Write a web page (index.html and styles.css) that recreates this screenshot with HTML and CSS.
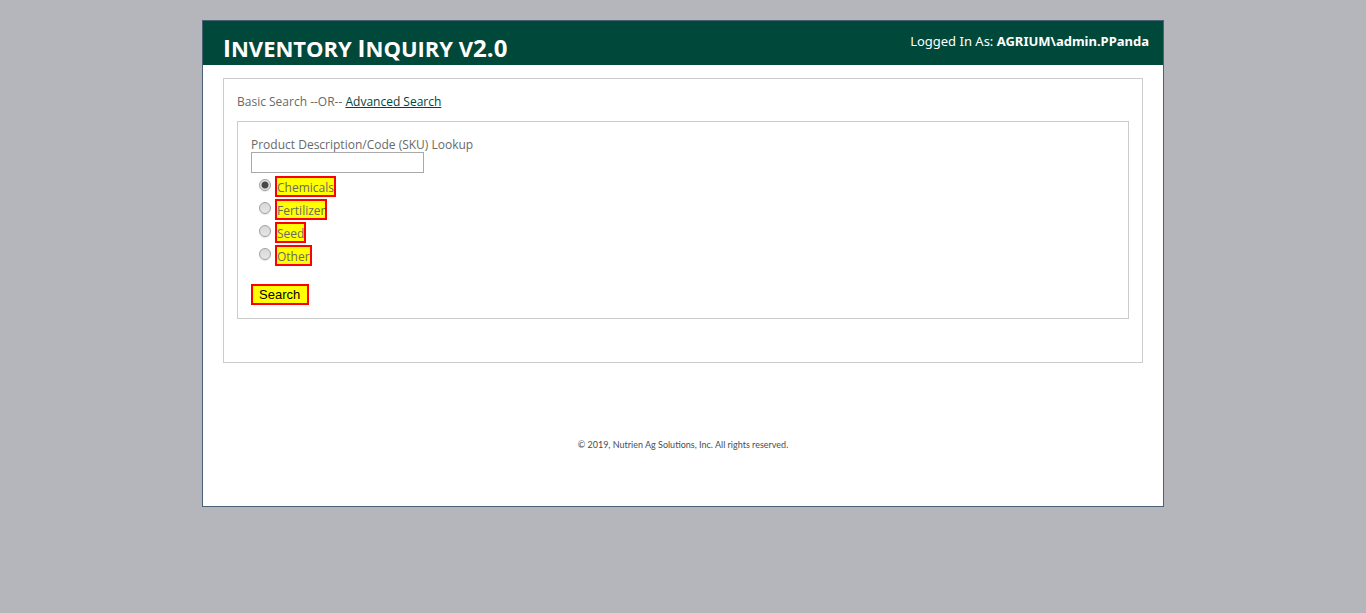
FILE: index.html
```
<!DOCTYPE html>
<html lang="en">
<head>
<meta charset="utf-8">
<title>Inventory Inquiry</title>
<link rel="stylesheet" href="styles.css">
</head>
<body>
<div class="page">
  <header class="header">
    <h1 class="title"><span class="cap">I</span>nventory <span class="cap">I</span>nquiry v<span class="cap">2.0</span></h1>
    <div class="login">Logged In As: <b>AGRIUM\admin.PPanda</b></div>
  </header>
  <main class="main">
    <section class="panel">
      <div class="modes">Basic Search --OR-- <a class="mode-link" href="#">Advanced Search</a></div>
      <form class="search">
        <label class="lookup-label" for="lookup">Product Description/Code (SKU) Lookup</label>
        <input class="lookup" id="lookup" type="text">
        <div class="options">
          <div class="option"><input class="radio" type="radio" name="type" id="chemicals" checked><label class="mark" for="chemicals">Chemicals</label></div>
          <div class="option"><input class="radio" type="radio" name="type" id="fertilizer"><label class="mark" for="fertilizer">Fertilizer</label></div>
          <div class="option"><input class="radio" type="radio" name="type" id="seed"><label class="mark" for="seed">Seed</label></div>
          <div class="option"><input class="radio" type="radio" name="type" id="other"><label class="mark" for="other">Other</label></div>
        </div>
        <button class="submit" type="button">Search</button>
      </form>
    </section>
  </main>
  <footer class="footer">© 2019, Nutrien Ag Solutions, Inc. All rights reserved.</footer>
</div>
</body>
</html>
```
FILE: styles.css
```
* { box-sizing: border-box; }
body {
  margin: 0;
  background: #b4b6bb;
  font-family: "Open Sans", "Noto Sans", sans-serif;
  font-size: 12px;
  line-height: 17px;
  color: #696969;
}
.page {
  max-width: 962px;
  margin: 20px auto;
  background: #fff;
  border: 1px solid #496077;
}
.header {
  display: flex;
  justify-content: space-between;
  background: #00483a;
  color: #fff;
  padding: 12px 14px 2px 20px;
}
.title {
  margin: 0;
  font-size: 22px;
  line-height: 30px;
  font-weight: 700;
  text-transform: uppercase;
}
.cap {
  font-size: 24px;
  line-height: 1;
}
.login {
  font-family: "Noto Sans", sans-serif;
  font-size: 13px;
}
.main { padding: 13px 20px 0; }
.panel {
  border: 1px solid #ccc;
  padding: 14px 13px 43px;
}
.mode-link { color: #034638; }
.search {
  display: flex;
  flex-direction: column;
  align-items: flex-start;
  margin-top: 11px;
  border: 1px solid #ccc;
  padding: 15px 13px 13px;
}
.lookup-label { line-height: 15px; }
.lookup {
  width: 173px;
  height: 21px;
  border: 1px solid #a9a9a9;
  background: #fff;
  padding: 1px 2px;
}
.options {
  display: flex;
  flex-direction: column;
  gap: 2px;
  padding: 3px 0 0 8px;
}
.option { display: flex; align-items: flex-start; gap: 4px; }
.radio {
  appearance: none;
  flex: none;
  width: 12px;
  height: 12px;
  margin: 3px 0 0;
  border: 1px solid #a0a0a0;
  border-radius: 50%;
  background: linear-gradient(#d8d8d8, #e6e6e6);
  box-shadow: 0 1px 1px #e4e4e4;
}
.radio:checked { background: radial-gradient(circle, #484848 0 3px, #e4e4e4 4px); }
.mark {
  border: 2px solid #f00;
  background: #ff0;
  padding-top: 2px;
  line-height: 15px;
}
.submit {
  margin-top: 18px;
  height: 21px;
  border: 2px solid #f00;
  background: #ff0;
  color: #000;
  padding: 0 7px 0 6px;
  font: 13px/17px "Liberation Sans", Arial, sans-serif;
}
.footer {
  padding: 76px 20px 55px;
  text-align: center;
  font-family: Lato, sans-serif;
  font-size: 9px;
  line-height: 12px;
  color: #4d4d4d;
}
```
